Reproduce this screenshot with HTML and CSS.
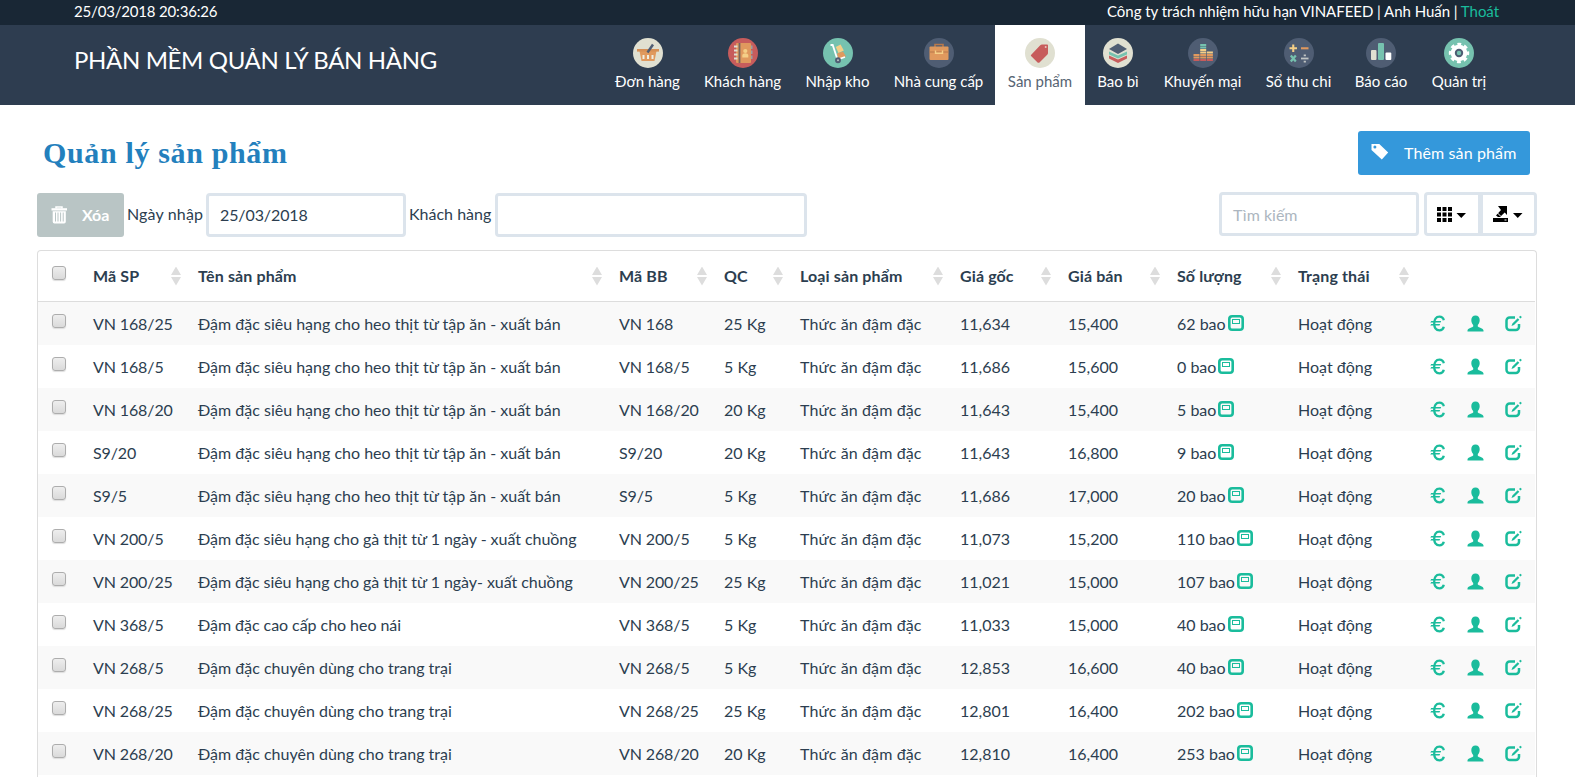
FILE: index.html
```
<!DOCTYPE html>
<html lang="vi">
<head>
<meta charset="utf-8">
<title>Quản lý sản phẩm</title>
<link rel="stylesheet" href="styles.css">
</head>
<body>
<svg class="defs" aria-hidden="true">
  <symbol id="euro" viewBox="0 0 17 17"><path d="M14.800 5.300C14.300 2.900 12.800 1.700 10.400 1.700 6.900 1.700 5.200 4.500 5.200 8.500s1.700 6.800 5.200 6.800c2.400 0 3.900-1.200 4.400-3.500" fill="none" stroke="currentColor" stroke-width="2.300"/><path d="M2.200 5.900h10l-.6 1.600H1.300zM2.200 8.900h8.900l-.6 1.600H1.300z" fill="currentColor"/></symbol>
  <symbol id="user" viewBox="0 0 17 17"><path d="M8.500.5c2.600 0 4.200 1.700 4.200 4.600 0 2-.7 3.900-1.900 5v1.400c.4.900 5.700 1.900 5.700 4v1H.5v-1c0-2.100 5.300-3.100 5.700-4v-1.400c-1.200-1.100-1.900-3-1.900-5C4.300 2.200 5.900.5 8.500.5z" fill="currentColor"/></symbol>
  <symbol id="edit" viewBox="0 0 17 17"><path d="M10 2.500H4.700A3.200 3.200 0 0 0 1.500 5.700v6.100A3.200 3.200 0 0 0 4.700 15h6.100a3.200 3.200 0 0 0 3.200-3.200V9" fill="none" stroke="currentColor" stroke-width="2.500"/><path d="M6.500 11l.9-2.500 5.300-5.300 1.600 1.600L9 10.100zM14 2l1.300-1.300 1.600 1.400L15.500 3.500z" fill="currentColor"/></symbol>
  <symbol id="box" viewBox="0 0 16 16"><rect x="1.300" y="1.300" width="13.400" height="13.400" rx="2.800" fill="none" stroke="currentColor" stroke-width="2.600"/><rect x="4.500" y="4.500" width="7" height="4" fill="none" stroke="currentColor"/></symbol>
</svg>
<div class="topbar"><span class="clock">25/03/2018 20:36:26</span><span class="account">Công ty trách nhiệm hữu hạn VINAFEED | Anh Huấn | <a>Thoát</a></span></div>
<header class="header">
  <div class="brand">PHẦN MỀM QUẢN LÝ BÁN HÀNG</div>
  <nav class="nav">
    <a class="w1"><svg viewBox="0 0 30 30"><circle cx="15" cy="15" r="15" fill="#e0e0d1"/><path d="M6.500 13h17l-2 10H8.500z" fill="#e0995e"/><path d="M4 11h22v2.600H4z" fill="#d68f55"/><path d="M10.500 17v4M15 17v4M19.500 17v4" stroke="#f0eee2" stroke-width="2"/><path d="M14.500 14.500l5.500-8" stroke="#4f5d73" stroke-width="2.400"/></svg><span>Đơn hàng</span></a>
    <a class="w2"><svg viewBox="0 0 30 30"><circle cx="15" cy="15" r="15" fill="#c75c5c"/><path d="M22 7.500h2.500v3.500H22zM22 12.500h2.500V16H22zM22 17.500h2.500V21H22z" fill="#9aa0a5"/><rect x="8" y="5" width="15" height="20" rx="1" fill="#e0995e"/><path d="M11.500 5v20" stroke="#75655f" stroke-width="1.800"/><circle cx="17.300" cy="13" r="2.100" fill="#f5cf87"/><path d="M14.300 19.500v-2c0-3 6-3 6 0v2z" fill="#f5cf87"/><path d="M6 8.500h3.500M6 12.500h3.500M6 16.500h3.500M6 20.500h3.500" stroke="#e0e0d1" stroke-width="1.800"/></svg><span>Khách hàng</span></a>
    <a class="w3"><svg viewBox="0 0 30 30"><circle cx="15" cy="15" r="15" fill="#76c2af"/><path d="M12.800 9l4.800-2.500 3.200 6-5.300 2.500z" fill="#f5cf87"/><path d="M14 15.500l6-2 3 5-7.500 3z" fill="#e0995e"/><path d="M7.500 7h2.200l4.800 14.500 7.500-2.500" fill="none" stroke="#fff" stroke-width="1.800"/><circle cx="15" cy="22.300" r="2" fill="#b5bbc1" stroke="#4f5d73" stroke-width="1.900"/></svg><span>Nhập kho</span></a>
    <a class="w4"><svg viewBox="0 0 30 30"><circle cx="15" cy="15" r="15" fill="#4f5d73"/><path d="M11 10V6.500h8V10" fill="none" stroke="#b8794b" stroke-width="1.600"/><rect x="5.500" y="8.500" width="19" height="13.500" rx="1" fill="#e0995e"/><path d="M5.500 14h19" stroke="#b8794b"/><path d="M11.500 12.500v2.800h7v-2.800" fill="none" stroke="#f5cf87" stroke-width="1.400"/></svg><span>Nhà cung cấp</span></a>
    <a class="w5 active"><svg viewBox="0 0 30 30"><circle cx="15" cy="15" r="15" fill="#e0e0d1"/><path d="M6 17l9-9.600q1-.8 2-.8h5.200q.8 0 .8.900v7.500q0 1-.8 1.800l-7.700 7.700q-1.200.8-2.200-.3l-6-6q-.8-.6-.3-1.200z" fill="#c75c5c"/><circle cx="20.700" cy="9" r="1" fill="#e8c6bd"/></svg><span>Sản phẩm</span></a>
    <a class="w6"><svg viewBox="0 0 30 30"><circle cx="15" cy="15" r="15" fill="#e0e0d1"/><path d="M6 17.500l9 4 9-4v3L15 25l-9-4.500z" fill="#c75c5c"/><path d="M6 13.500l9 4 9-4v3L15 20.500l-9-4z" fill="#76c2af"/><path d="M15 5.500l9 5.500-9 5-9-5z" fill="#4f5d73"/></svg><span>Bao bì</span></a>
    <a class="w7"><svg viewBox="0 0 30 30"><circle cx="15" cy="15" r="15" fill="#4f5d73"/><path d="M5.500 22h6M12.200 22h6M18.900 22h6" stroke="#c75c5c" stroke-width="2"/><path d="M5.500 17h6M12.200 17h6M18.900 17h6M5.500 19.500h6M12.200 19.500h6M18.900 19.500h6" stroke="#e0995e" stroke-width="2"/><path d="M12.200 14.500h6M18.900 14.500h6M12.200 12h6" stroke="#f5cf87" stroke-width="2"/><path d="M12.200 7h6M12.200 9.500h6" stroke="#76c2af" stroke-width="2"/></svg><span>Khuyến mại</span></a>
    <a class="w8"><svg viewBox="0 0 30 30"><circle cx="15" cy="15" r="15" fill="#4f5d73"/><path d="M5.500 10.300h7.500M9.250 6.500V14" stroke="#f5cf87" stroke-width="2.100"/><path d="M17 10.300h7.500" stroke="#e0995e" stroke-width="2.100"/><path d="M6.800 17.500l5 6M11.800 17.500l-5 6" stroke="#76c2af" stroke-width="2.200"/><path d="M17 20.500h7.500" stroke="#c1c5c4" stroke-width="1.800"/><path d="M19.700 17.400h2.200M19.700 23.600h2.200" stroke="#c1c5c4" stroke-width="1.900"/></svg><span>Sổ thu chi</span></a>
    <a class="w9"><svg viewBox="0 0 30 30"><circle cx="15" cy="15" r="15" fill="#4f5d73"/><rect x="5" y="12" width="5.500" height="10" rx="1" fill="#e0e0d1"/><rect x="12" y="5" width="6" height="17" rx="1" fill="#76c2af"/><rect x="19.500" y="14.500" width="5.800" height="7.500" rx="1" fill="#fff"/></svg><span>Báo cáo</span></a>
    <a class="w10"><svg viewBox="0 0 30 30"><circle cx="15" cy="15" r="15" fill="#76c2af"/><circle cx="15" cy="15" r="8.600" fill="none" stroke="#fff" stroke-width="3.200" stroke-dasharray="3.700 3.054" stroke-dashoffset="1.850"/><circle cx="15" cy="15" r="5.800" fill="none" stroke="#fff" stroke-width="5"/><circle cx="15" cy="15" r="3.200" fill="#76c2af" stroke="#4f5d73" stroke-width="2"/></svg><span>Quản trị</span></a>
  </nav>
</header>
<main class="page">
  <div class="heading"><h1>Quản lý sản phẩm</h1>
    <button class="btn primary"><svg width="18" height="17" viewBox="0 0 18 17"><path fill-rule="evenodd" d="M.5 1h7.800l8.900 8.600-6.400 6.900L.5 7zM3.900 2.500a1.500 1.500 0 1 0 0 3 1.500 1.500 0 0 0 0-3z" fill="#fff"/></svg><span>Thêm sản phẩm</span></button></div>
  <div class="toolbar">
    <button class="btn muted"><svg width="17" height="18" viewBox="0 0 17 18"><path d="M5 2.500V1h6v1.500" fill="none" stroke="#fff" stroke-width="1.500"/><path d="M.5 2.200h15.500v2.300H.5z" fill="#fff"/><path fill-rule="evenodd" d="M1.700 5.300h13.100v10.500q0 1.700-1.700 1.700H3.400q-1.700 0-1.700-1.700zM4 6.500v9h1v-9zm2.500 0v9h1v-9zm2.600 0v9h1v-9zm2.600 0v9h1v-9z" fill="#fff"/></svg><span>Xóa</span></button>
    <label class="l1">Ngày nhập</label><div class="field date">25/03/2018</div>
    <label class="l2">Khách hàng</label><div class="field customer"></div>
    <div class="field search">Tìm kiếm</div>
    <div class="tools">
      <div class="tool"><svg width="30" height="18" viewBox="0 0 30 18"><path d="M0 1h4v4H0zM5.500 1h4v4h-4zM11 1h4v4h-4zM0 6.500h4v4H0zM5.500 6.500h4v4h-4zM11 6.500h4v4h-4zM0 12h4v4H0zM5.500 12h4v4h-4zM11 12h4v4h-4zM19.500 7h9.500l-4.750 5z"/></svg></div>
      <div class="tool"><svg width="30" height="18" viewBox="0 0 30 18"><path d="M0 12h15v4H0zM5 0h9v9l-2.300-2.500L7 11 5 11 3 9.500 8 4z"/><path d="M4.500 7l3 3" stroke="#fff"/><path d="M11.500 14h2" stroke="#fff"/><path d="M20 7h9.500l-4.750 5z"/></svg></div>
    </div>
  </div>
  <div class="tablebox"><table>
    <colgroup><col class="c1"><col class="c2"><col class="c3"><col class="c4"><col class="c5"><col class="c6"><col class="c7"><col class="c8"><col class="c9"><col class="c10"><col></colgroup>
    <thead><tr><th><i class="check"></i></th><th class="sort">Mã SP</th><th class="sort">Tên sản phẩm</th><th class="sort">Mã BB</th><th class="sort">QC</th><th class="sort">Loại sản phẩm</th><th class="sort">Giá gốc</th><th class="sort">Giá bán</th><th class="sort">Số lượng</th><th class="sort">Trạng thái</th><th></th></tr></thead>
    <tbody>
    <tr><td><i class="check"></i></td><td class="code">VN 168/25</td><td>Đậm đặc siêu hạng cho heo thịt từ tập ăn - xuất bán</td><td class="code">VN 168</td><td>25 Kg</td><td class="kind">Thức ăn đậm đặc</td><td>11,634</td><td>15,400</td><td>62 bao <svg class="box"><use href="#box"/></svg></td><td>Hoạt động</td><td><div class="acts"><svg><use href="#euro"/></svg><svg><use href="#user"/></svg><svg><use href="#edit"/></svg></div></td></tr>
    <tr><td><i class="check"></i></td><td class="code">VN 168/5</td><td>Đậm đặc siêu hạng cho heo thịt từ tập ăn - xuất bán</td><td class="code">VN 168/5</td><td>5 Kg</td><td class="kind">Thức ăn đậm đặc</td><td>11,686</td><td>15,600</td><td>0 bao <svg class="box"><use href="#box"/></svg></td><td>Hoạt động</td><td><div class="acts"><svg><use href="#euro"/></svg><svg><use href="#user"/></svg><svg><use href="#edit"/></svg></div></td></tr>
    <tr><td><i class="check"></i></td><td class="code">VN 168/20</td><td>Đậm đặc siêu hạng cho heo thịt từ tập ăn - xuất bán</td><td class="code">VN 168/20</td><td>20 Kg</td><td class="kind">Thức ăn đậm đặc</td><td>11,643</td><td>15,400</td><td>5 bao <svg class="box"><use href="#box"/></svg></td><td>Hoạt động</td><td><div class="acts"><svg><use href="#euro"/></svg><svg><use href="#user"/></svg><svg><use href="#edit"/></svg></div></td></tr>
    <tr><td><i class="check"></i></td><td class="code">S9/20</td><td>Đậm đặc siêu hạng cho heo thịt từ tập ăn - xuất bán</td><td class="code">S9/20</td><td>20 Kg</td><td class="kind">Thức ăn đậm đặc</td><td>11,643</td><td>16,800</td><td>9 bao <svg class="box"><use href="#box"/></svg></td><td>Hoạt động</td><td><div class="acts"><svg><use href="#euro"/></svg><svg><use href="#user"/></svg><svg><use href="#edit"/></svg></div></td></tr>
    <tr><td><i class="check"></i></td><td class="code">S9/5</td><td>Đậm đặc siêu hạng cho heo thịt từ tập ăn - xuất bán</td><td class="code">S9/5</td><td>5 Kg</td><td class="kind">Thức ăn đậm đặc</td><td>11,686</td><td>17,000</td><td>20 bao <svg class="box"><use href="#box"/></svg></td><td>Hoạt động</td><td><div class="acts"><svg><use href="#euro"/></svg><svg><use href="#user"/></svg><svg><use href="#edit"/></svg></div></td></tr>
    <tr><td><i class="check"></i></td><td class="code">VN 200/5</td><td class="tight">Đậm đặc siêu hạng cho gà thịt từ 1 ngày - xuất chuồng</td><td class="code">VN 200/5</td><td>5 Kg</td><td class="kind">Thức ăn đậm đặc</td><td>11,073</td><td>15,200</td><td>110 bao <svg class="box"><use href="#box"/></svg></td><td>Hoạt động</td><td><div class="acts"><svg><use href="#euro"/></svg><svg><use href="#user"/></svg><svg><use href="#edit"/></svg></div></td></tr>
    <tr><td><i class="check"></i></td><td class="code">VN 200/25</td><td class="tight">Đậm đặc siêu hạng cho gà thịt từ 1 ngày- xuất chuồng</td><td class="code">VN 200/25</td><td>25 Kg</td><td class="kind">Thức ăn đậm đặc</td><td>11,021</td><td>15,000</td><td>107 bao <svg class="box"><use href="#box"/></svg></td><td>Hoạt động</td><td><div class="acts"><svg><use href="#euro"/></svg><svg><use href="#user"/></svg><svg><use href="#edit"/></svg></div></td></tr>
    <tr><td><i class="check"></i></td><td class="code">VN 368/5</td><td class="tight">Đậm đặc cao cấp cho heo nái</td><td class="code">VN 368/5</td><td>5 Kg</td><td class="kind">Thức ăn đậm đặc</td><td>11,033</td><td>15,000</td><td>40 bao <svg class="box"><use href="#box"/></svg></td><td>Hoạt động</td><td><div class="acts"><svg><use href="#euro"/></svg><svg><use href="#user"/></svg><svg><use href="#edit"/></svg></div></td></tr>
    <tr><td><i class="check"></i></td><td class="code">VN 268/5</td><td>Đậm đặc chuyên dùng cho trang trại</td><td class="code">VN 268/5</td><td>5 Kg</td><td class="kind">Thức ăn đậm đặc</td><td>12,853</td><td>16,600</td><td>40 bao <svg class="box"><use href="#box"/></svg></td><td>Hoạt động</td><td><div class="acts"><svg><use href="#euro"/></svg><svg><use href="#user"/></svg><svg><use href="#edit"/></svg></div></td></tr>
    <tr><td><i class="check"></i></td><td class="code">VN 268/25</td><td>Đậm đặc chuyên dùng cho trang trại</td><td class="code">VN 268/25</td><td>25 Kg</td><td class="kind">Thức ăn đậm đặc</td><td>12,801</td><td>16,400</td><td>202 bao <svg class="box"><use href="#box"/></svg></td><td>Hoạt động</td><td><div class="acts"><svg><use href="#euro"/></svg><svg><use href="#user"/></svg><svg><use href="#edit"/></svg></div></td></tr>
    <tr><td><i class="check"></i></td><td class="code">VN 268/20</td><td>Đậm đặc chuyên dùng cho trang trại</td><td class="code">VN 268/20</td><td>20 Kg</td><td class="kind">Thức ăn đậm đặc</td><td>12,810</td><td>16,400</td><td>253 bao <svg class="box"><use href="#box"/></svg></td><td>Hoạt động</td><td><div class="acts"><svg><use href="#euro"/></svg><svg><use href="#user"/></svg><svg><use href="#edit"/></svg></div></td></tr>
    </tbody></table></div>
</main>
</body>
</html>
```
FILE: styles.css
```
* { box-sizing: border-box; }
body { margin: 0; height: 777px; background: #fff; color: #2c3e50; font: 16px/23px Lato, "Liberation Sans", sans-serif; }
.defs { display: none; }
.topbar { height: 25px; padding: 0 76px 0 74px; display: flex; justify-content: space-between; background: #192735; color: #fff; font-size: 15px; line-height: 23px; white-space: nowrap; }
.topbar a { color: #1abc9c; }
.clock { letter-spacing: -.18px; }
.account { letter-spacing: -.04px; }
.header { height: 80px; padding-left: 74px; display: flex; background: #2e3d50; color: #fff; }
.brand { width: 529px; padding-top: 20px; font-size: 24px; line-height: 30px; letter-spacing: -.36px; white-space: nowrap; }
.nav { display: flex; font-size: 15px; line-height: 20px; white-space: nowrap; }
.nav a { height: 80px; padding-top: 13px; display: flex; flex-direction: column; align-items: center; gap: 3px; }
.nav svg { width: 30px; height: 30px; flex: none; }
.nav .active { background: #fff; color: #566473; }
.w1 { width: 89px; } .w2 { width: 101px; } .w3 { width: 89px; } .w4 { width: 113px; } .w5 { width: 90px; }
.w6 { width: 66px; } .w7 { width: 103px; } .w8 { width: 89px; } .w9 { width: 76px; } .w10 { width: 80px; }
.page { padding: 26px 38px 0 37px; }
.heading { height: 61px; padding: 0 7px 0 6px; display: flex; justify-content: space-between; align-items: flex-start; }
h1 { margin: 0; padding-top: 3px; font: bold 30px/38px "Liberation Serif", serif; letter-spacing: .65px; color: #2380bd; }
.btn { height: 44px; padding: 0; border: 0; border-radius: 3px; display: flex; align-items: center; font: 16px/22px Lato, "Liberation Sans", sans-serif; color: #fff; flex: none; }
.primary { width: 172px; padding-left: 13px; gap: 15px; background: #3498db; letter-spacing: .12px; }
.primary svg { margin-top: -3px; }
.muted { width: 87px; padding-left: 14px; gap: 14px; background: #b9c5c5; font-weight: bold; margin-top: 1px; }
.toolbar { height: 58px; display: flex; align-items: flex-start; white-space: nowrap; }
.l1 { width: 82px; padding: 10px 0 0 3px; letter-spacing: .15px; }
.l2 { width: 89px; padding: 10px 0 0 3px; }
.field { height: 44px; border: 3px solid #dce4ec; border-radius: 4px; padding: 8px 11px; background: #fff; }
.date { width: 200px; margin-top: 1px; padding-top: 7px; letter-spacing: -.1px; }
.customer { width: 312px; margin-top: 1px; }
.search { width: 200px; margin-left: auto; color: #acb6c0; }
.tools { margin-left: 5px; display: flex; width: 113px; height: 44px; border: 3px solid #dce4ec; border-radius: 4px; }
.tool { width: 51px; display: flex; align-items: center; padding: 2px 0 0 10px; }
.tool:first-child { width: 56px; border-right: 5px solid #dce4ec; }
.tablebox { width: 1500px; height: 527px; border: 1px solid #ddd; border-bottom: 0; border-radius: 4px 4px 0 0; padding-right: 1px; }
table { width: 1497px; table-layout: fixed; border-collapse: separate; border-spacing: 0; }
th, td { padding: 0 0 0 8px; text-align: left; white-space: nowrap; }
th { height: 51px; padding-bottom: 2px; border-bottom: 1px solid #ddd; font-weight: bold; letter-spacing: .12px; }
td { height: 43px; }
tbody tr:nth-child(odd) { background: #f9f9f9; }
.code { letter-spacing: -.12px; }
.kind { letter-spacing: .12px; }
.tight { letter-spacing: -.05px; }
.sort::after { content: ""; float: right; width: 10px; height: 19px; margin: 3px 9px 0 0; background: #ddd; clip-path: polygon(50% 0, 100% 45%, 0 45%, 0 55%, 100% 55%, 50% 100%, 0 55%, 0 45%); }
.check { display: block; width: 14px; height: 14px; margin: -6px 0 0 6px; border: 1px solid #adadad; border-radius: 3px; background: linear-gradient(#eee, #dadada); box-shadow: 0 1px 1px #ddd; }
th .check { margin-top: -4px; }
.c1 { width: 47px; } .c2 { width: 105px; } .c3 { width: 421px; } .c4 { width: 105px; } .c5 { width: 76px; } .c6 { width: 160px; }
.c7 { width: 108px; } .c8 { width: 109px; } .c9 { width: 121px; } .c10 { width: 128px; }
.box { width: 16px; height: 16px; color: #1abc9c; vertical-align: -1px; margin-left: -2px; }
.acts { display: flex; justify-content: space-between; width: 93px; margin: -1px 0 0 3px; color: #1abc9c; }
.acts svg { width: 17px; height: 17px; }
```
